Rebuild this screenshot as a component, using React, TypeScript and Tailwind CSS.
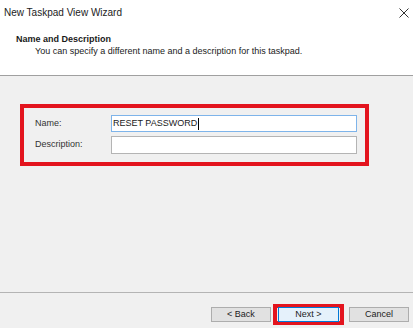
export default function App() {
  const font = { fontFamily: '"Liberation Sans", Arial, sans-serif' };
  return (
    <div className="w-[413px] h-[328px] bg-[#f0f0f0] flex flex-col overflow-hidden text-[#1a1a1a]" style={font}>
      {/* title bar + header */}
      <div className="bg-white h-[76px] border-b border-[#a0a0a0] flex flex-col shrink-0">
        <div className="h-[25px] flex items-center justify-between pl-[4px] pr-[3px]">
          <span className="text-[10px] text-[#222]">New Taskpad View Wizard</span>
          <svg width="12" height="12" viewBox="0 0 12 12" className="mt-[1px]">
            <path d="M1.5 1.5 L10.5 10.5 M10.5 1.5 L1.5 10.5" stroke="#333" strokeWidth="1" />
          </svg>
        </div>
        <div className="pl-[16px] pt-[9px] text-[9px] font-bold leading-[11px]">Name and Description</div>
        <div className="pl-[35px] pt-[1px] text-[9px] leading-[11px]">
          You can specify a different name and a description for this taskpad.
        </div>
      </div>

      {/* content */}
      <div className="flex-1">
        <div className="ml-[20px] mt-[28px] w-[349px] h-[62px] border-4 border-[#e3141e] pt-[7px] pl-[11px] pr-[8px] flex flex-col gap-[4px]">
          <div className="flex items-center h-[17px]">
            <span className="w-[76px] text-[9px] text-[#333]">Name:</span>
            <div className="flex-1 h-[17px] bg-white border border-[#7eb4ea] flex items-center pl-[1px] text-[9px]">
              RESET PASSWORD
              <span className="w-px h-[12px] bg-black ml-[1px]" />
            </div>
          </div>
          <div className="flex items-center h-[18px]">
            <span className="w-[76px] text-[9px] text-[#333]">Description:</span>
            <div className="flex-1 h-[18px] bg-white border border-[#b4b4b4]" />
          </div>
        </div>
      </div>

      {/* bottom separator */}
      <div className="h-px bg-[#b4b4b4] shrink-0" />
      <div className="h-[35px] shrink-0 flex items-start justify-end pr-[4px] pt-[10px]">
        <button className="w-[60px] h-[15px] bg-[#e1e1e1] border border-[#adadad] text-[9px] leading-none text-[#222] mt-[4px]">
          &lt; Back
        </button>
        <div className="ml-[2px] border-4 border-[#e3141e] px-[1px] flex items-center h-[21px] mt-[1px]">
          <button className="w-[61px] h-[15px] bg-[#e5f1fb] border border-[#0078d7] text-[9px] leading-none text-[#222]">
            Next &gt;
          </button>
        </div>
        <button className="ml-[5px] w-[60px] h-[15px] bg-[#e1e1e1] border border-[#adadad] text-[9px] leading-none text-[#222] mt-[4px]">
          Cancel
        </button>
      </div>
    </div>
  );
}
